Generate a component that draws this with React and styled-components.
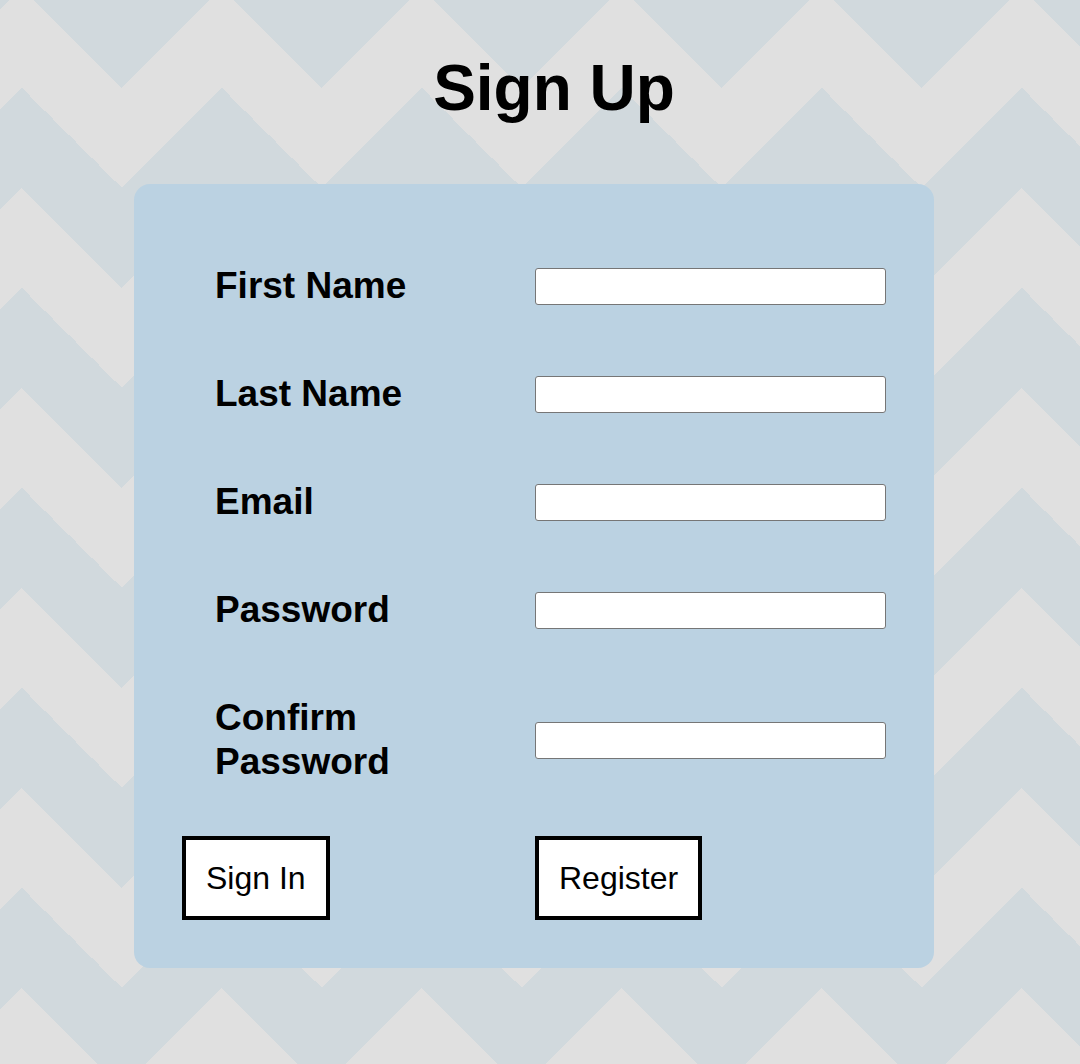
import React from "react";
import styled, { createGlobalStyle } from "styled-components";

const GlobalStyle = createGlobalStyle`
  body {
    margin: 0;
    font-family: "Liberation Sans", Arial, Helvetica, sans-serif;
  }
`;

const fields = ["First Name", "Last Name", "Email", "Password", "Confirm Password"];

function App() {
  return (
    <Page>
      <GlobalStyle />
      <Title>Sign Up</Title>
      <Card>
        <Form>
          {fields.map((label) => (
            <React.Fragment key={label}>
              <Label htmlFor={label}>{label}</Label>
              <Field>
                <Input id={label} type={label.includes("Password") ? "password" : "text"} />
              </Field>
            </React.Fragment>
          ))}
        </Form>
        <Buttons>
          <Button type="button">Sign In</Button>
          <Button type="button">Register</Button>
        </Buttons>
      </Card>
    </Page>
  );
}

export default App;

const Page = styled.div`
  min-height: 100vh;
  box-sizing: border-box;
  padding: 51px 0 60px;
  background:
    linear-gradient(135deg, #e0e0e0 25%, transparent 25%) -78px 88px / 200px 200px,
    linear-gradient(225deg, #e0e0e0 25%, transparent 25%) -78px 88px / 200px 200px,
    linear-gradient(315deg, #e0e0e0 25%, transparent 25%) 22px 88px / 200px 200px,
    linear-gradient(45deg, #e0e0e0 25%, transparent 25%) 22px 88px / 200px 200px,
    #d1d9dd;
`;
const Title = styled.h1`
  margin: 0 0 59px;
  padding-left: 28px;
  text-align: center;
  font-size: 64px;
  line-height: 74px;
  font-weight: 700;
  color: #000;
`;
const Card = styled.div`
  width: 800px;
  box-sizing: border-box;
  margin-left: 134px;
  padding: 48px;
  background: #bbd2e2;
  border-radius: 16px;
`;
const Form = styled.div`
  display: grid;
  grid-template-columns: 353px 351px;
`;
const Label = styled.label`
  padding: 32px 0 32px 33px;
  font-size: 37px;
  line-height: 44px;
  font-weight: 700;
  color: #000;
  width: 200px;
`;
const Field = styled.div`
  display: flex;
  align-items: center;
`;
const Input = styled.input`
  box-sizing: border-box;
  width: 351px;
  height: 37px;
  margin: 0;
  border: 1px solid #767676;
  border-radius: 3px;
  background: #fff;
`;
const Buttons = styled.div`
  display: grid;
  grid-template-columns: 353px 351px;
  margin-top: 20px;
  justify-items: start;
`;
const Button = styled.button`
  padding: 20px;
  border: 4px solid #000;
  background: #fff;
  font-family: "Liberation Sans", Arial, sans-serif;
  font-size: 32px;
  line-height: 36px;
  color: #000;
  border-radius: 0;
`;
